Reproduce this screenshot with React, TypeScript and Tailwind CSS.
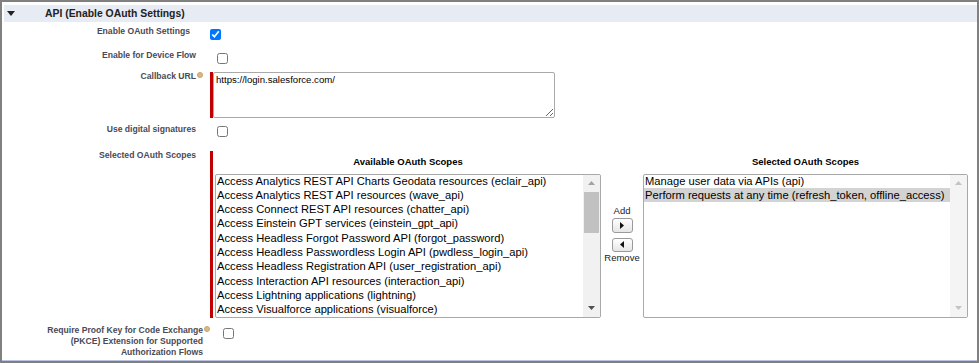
import React from 'react';

const availableScopes = [
  'Access Analytics REST API Charts Geodata resources (eclair_api)',
  'Access Analytics REST API resources (wave_api)',
  'Access Connect REST API resources (chatter_api)',
  'Access Einstein GPT services (einstein_gpt_api)',
  'Access Headless Forgot Password API (forgot_password)',
  'Access Headless Passwordless Login API (pwdless_login_api)',
  'Access Headless Registration API (user_registration_api)',
  'Access Interaction API resources (interaction_api)',
  'Access Lightning applications (lightning)',
  'Access Visualforce applications (visualforce)',
];

const selectedScopes = [
  'Manage user data via APIs (api)',
  'Perform requests at any time (refresh_token, offline_access)',
];

const HelpIcon = () => (
  <span className="inline-block w-[6px] h-[6px] ml-[1px] -mr-[7px] rounded-full bg-[#d9b98a] border border-[#c9a26a] align-[1px]" />
);

const Label = ({ children, width = 'w-[192px]' }: { children: React.ReactNode; width?: string }) => (
  <div className={`${width} shrink-0 text-right text-[8.6px] leading-[11px] font-bold text-[#4a4a56]`}>{children}</div>
);

const Check = ({ checked = false, ml }: { checked?: boolean; ml: string }) => (
  <input
    type="checkbox"
    defaultChecked={checked}
    className={`${ml} m-0 w-[11px] h-[11px] accent-[#0075ff] shrink-0`}
  />
);

const Arrow = ({ up, color }: { up?: boolean; color: string }) => (
  <svg width="7" height="4" viewBox="0 0 7 4">
    <polygon points={up ? '0,4 7,4 3.5,0' : '0,0 7,0 3.5,4'} fill={color} />
  </svg>
);

const Scrollbar = ({ thumb }: { thumb?: boolean }) => (
  <div className={`w-[17px] h-full flex flex-col ${thumb ? 'bg-[#f1f1f1]' : 'bg-[#f4f4f4]'}`}>
    <div className="h-[17px] flex items-center justify-center">
      <Arrow up color={thumb ? '#a3a3a3' : '#c3c3c3'} />
    </div>
    {thumb ? <div className="mx-[1px] h-[41px] bg-[#c1c1c1]" /> : null}
    <div className="flex-1" />
    <div className="h-[17px] flex items-center justify-center">
      <Arrow color={thumb ? '#505050' : '#c3c3c3'} />
    </div>
  </div>
);

const ScopeList = ({ items, highlight, thumb }: { items: string[]; highlight?: number; thumb?: boolean }) => (
  <div className="h-[144px] border border-[#a9a9a9] rounded-[2px] flex bg-white overflow-hidden">
    <div className="flex-1 min-w-0 -mt-[1px]">
      {items.map((item, i) => (
        <div
          key={item}
          className={`h-[14.3px] pl-[1px] text-[11.2px] leading-[14.3px] text-black whitespace-nowrap ${i === highlight ? 'bg-[#d3d3d3]' : ''}`}
        >
          {item}
        </div>
      ))}
    </div>
    <Scrollbar thumb={thumb} />
  </div>
);

const MoveButton = ({ dir, h }: { dir: 'right' | 'left'; h: string }) => (
  <button className={`w-[21px] ${h} rounded-[3px] border border-[#9a9a9a] bg-gradient-to-b from-white to-[#e6e6e6] flex items-center justify-center`}>
    <svg width="4" height="7" viewBox="0 0 4 7">
      <polygon points={dir === 'right' ? '0,0 4,3.5 0,7' : '4,0 0,3.5 4,7'} fill="#111" />
    </svg>
  </button>
);

export default function App() {
  return (
    <div className="w-[979px] h-[363px] border-2 border-[#808080] bg-white font-['Liberation_Sans',Arial,sans-serif]">
      <div className="h-full border-b border-[#b9c5de] pt-[3px] pl-[2px]">
        {/* section header */}
        <div className="h-[17px] bg-[#e7ebf3] flex items-center">
          <svg width="8" height="5" viewBox="0 0 8 5" className="ml-[3px]">
            <polygon points="0,0 8,0 4,5" fill="#222" />
          </svg>
          <span className="ml-[30px] text-[10.4px] font-bold text-[#222]">API (Enable OAuth Settings)</span>
        </div>

        <div className="flex items-start mt-[4px]">
          <Label width="w-[186px]">Enable OAuth Settings</Label>
          <Check checked ml="ml-[20px] mt-[3px]" />
        </div>

        <div className="flex items-start mt-[10px]">
          <Label>Enable for Device Flow</Label>
          <Check ml="ml-[21px] mt-[3px]" />
        </div>

        <div className="flex items-start mt-[7px]">
          <Label>
            Callback URL
            <HelpIcon />
          </Label>
          <div className="flex ml-[14px] mt-[1px]">
            <div className="w-[3px] bg-[#c00000]" />
            <textarea
              readOnly
              defaultValue="https://login.salesforce.com/"
              className="block w-[342px] h-[46px] border border-[#a9a9a9] rounded-[2px] px-[2px] pt-[1px] text-[9.6px] leading-[12px] text-black bg-white outline-none"
            />
          </div>
        </div>

        <div className="flex items-start mt-[6px]">
          <Label>Use digital signatures</Label>
          <Check ml="ml-[21px] mt-[2px]" />
        </div>

        <div className="flex items-start mt-[13px]">
          <Label>Selected OAuth Scopes</Label>
          <div className="flex ml-[14px] mt-[1px]">
            <div className="w-[3px] h-[167px] bg-[#c00000]" />
            <div className="ml-[2px] pt-[6px] grid grid-cols-[386px_42px_325px]">
              <div className="text-center text-[9.5px] leading-[10px] font-bold text-black">Available OAuth Scopes</div>
              <div />
              <div className="text-center text-[9.5px] leading-[10px] font-bold text-black">Selected OAuth Scopes</div>

              <div className="mt-[6px]">
                <ScopeList items={availableScopes} thumb />
              </div>
              <div className="mt-[6px] pt-[32px] flex flex-col items-center text-[9.5px] leading-[10px] text-[#222]">
                <span>Add</span>
                <div className="mt-[2px]">
                  <MoveButton dir="right" h="h-[15px]" />
                </div>
                <div className="mt-[5px]">
                  <MoveButton dir="left" h="h-[14px]" />
                </div>
                <span className="mt-[1px]">Remove</span>
              </div>
              <div className="mt-[6px]">
                <ScopeList items={selectedScopes} highlight={1} />
              </div>
            </div>
          </div>
        </div>

        <div className="flex items-start mt-[7px]">
          <Label width="w-[199px]">
            Require Proof Key for Code Exchange
            <HelpIcon />
            <br />
            (PKCE) Extension for Supported
            <br />
            Authorization Flows
          </Label>
          <Check ml="ml-[20px] mt-[3px]" />
        </div>
      </div>
    </div>
  );
}
